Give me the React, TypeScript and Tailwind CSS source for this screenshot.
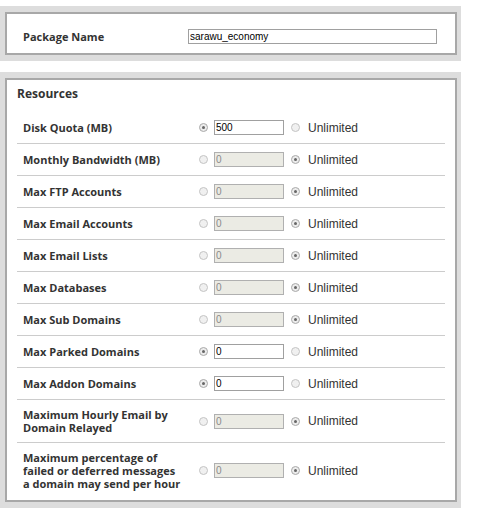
import React from 'react';

type Row = {
    label: string;
    value: string;
    unlimited: boolean;
};

const rows: Row[] = [
    { label: 'Disk Quota (MB)', value: '500', unlimited: false },
    { label: 'Monthly Bandwidth (MB)', value: '0', unlimited: true },
    { label: 'Max FTP Accounts', value: '0', unlimited: true },
    { label: 'Max Email Accounts', value: '0', unlimited: true },
    { label: 'Max Email Lists', value: '0', unlimited: true },
    { label: 'Max Databases', value: '0', unlimited: true },
    { label: 'Max Sub Domains', value: '0', unlimited: true },
    { label: 'Max Parked Domains', value: '0', unlimited: false },
    { label: 'Max Addon Domains', value: '0', unlimited: false },
    { label: 'Maximum Hourly Email by Domain Relayed', value: '0', unlimited: true },
    { label: 'Maximum percentage of failed or deferred messages a domain may send per hour', value: '0', unlimited: true },
];

const Radio = ({ checked }: { checked: boolean }) => (
    <span
        className={`flex h-[9px] w-[9px] shrink-0 items-center justify-center rounded-full border ${
            checked ? 'border-[#aaaaaa] bg-[#ececec]' : 'border-[#c4c4c4] bg-[#f0f0f0]'
        }`}
    >
        {checked && <span className="h-[3px] w-[3px] rounded-full bg-[#666]"></span>}
    </span>
);

const App = () => {
    const label = "text-[11px] leading-[13px] font-bold text-[#333] font-['Open_Sans',sans-serif]";

    return (
        <div className="w-[479px] min-h-[512px] bg-white pt-[6px]">
            {/* Package name */}
            <div className="w-[461px] bg-[#dddddd] pl-[5px] pr-[4px] py-[6px]">
                <div className="flex items-center border-2 border-[#a8a8a8] bg-white pl-[16px] pt-[15px] pb-[9px]">
                    <span className={`${label} w-[165px]`}>Package Name</span>
                    <input
                        readOnly
                        value="sarawu_economy"
                        className="h-[15px] w-[249px] border border-[#a0a0a0] bg-white px-[1px] text-[10px] text-black font-['Liberation_Sans',Arial,sans-serif] outline-none"
                    />
                </div>
            </div>

            {/* Resources */}
            <div className="mt-[11px] w-[461px] bg-[#dddddd] pl-[5px] pr-[4px] py-[6px]">
                <div className="border-2 border-[#a8a8a8] bg-white px-[10px] pb-[2px]">
                    <div className="pt-[6px] pb-[10px] text-[12px] leading-[16px] font-bold text-[#333] font-['Open_Sans',sans-serif]">
                        Resources
                    </div>
                    {rows.map((row, i) => (
                        <div
                            key={row.label}
                            className={`flex items-center py-[8px] pl-[6px] ${i < rows.length - 1 ? 'border-b border-[#cccccc]' : ''}`}
                        >
                            <span className={`${label} w-[176px] pr-[18px]`}>{row.label}</span>
                            <Radio checked={!row.unlimited} />
                            <input
                                readOnly
                                value={row.value}
                                className={`ml-[6px] h-[15px] w-[70px] border px-[1px] text-[10px] font-['Liberation_Sans',Arial,sans-serif] outline-none ${
                                    row.unlimited
                                        ? 'border-[#b0b0b0] bg-[#ebebe4] text-[#8a8a8a]'
                                        : 'border-[#a0a0a0] bg-white text-black'
                                }`}
                            />
                            <span className="ml-[7px]">
                                <Radio checked={row.unlimited} />
                            </span>
                            <span className="ml-[8px] text-[12px] leading-[14px] text-[#333] font-['Liberation_Sans',Arial,sans-serif]">
                                Unlimited
                            </span>
                        </div>
                    ))}
                </div>
            </div>
        </div>
    );
};

export default App;
